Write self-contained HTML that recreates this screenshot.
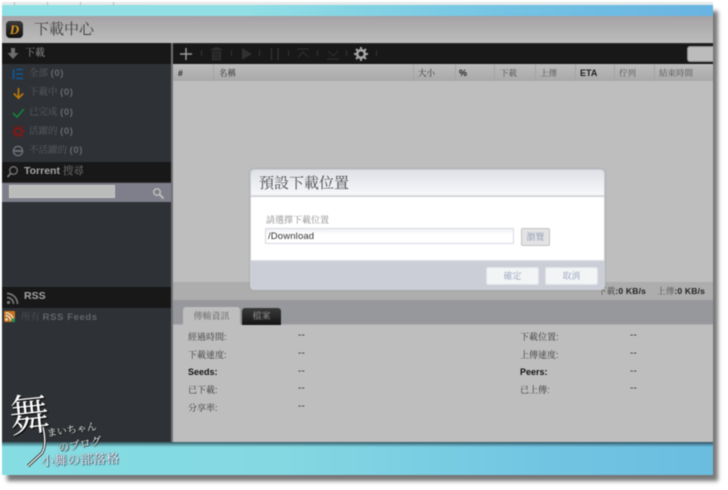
<!DOCTYPE html>
<html lang="zh-Hant"><head><meta charset="utf-8"><title>下載中心</title>
<style>
*{box-sizing:border-box;margin:0;padding:0}
html,body{width:728px;height:490px;overflow:hidden;background:#fff}
body{position:relative;font-family:"Liberation Sans","Noto Serif CJK SC","Noto Serif CJK TC",serif}
#wrap{position:absolute;left:0;top:0;width:728px;height:490px;filter:blur(.45px)}
.a{position:absolute;white-space:nowrap}
.side{font-size:9.500px;color:#5c5f64;font-weight:400;line-height:12px}
.side b{font-weight:700;font-size:9.500px;color:#666a6f;letter-spacing:.6px}
.hd{font-size:8.500px;color:#333;line-height:12px;top:67px}
.sep{position:absolute;top:65px;width:1px;height:16px;background:#a3a3a3}
.ts{position:absolute;top:50px;width:1px;height:6px;background:#333}
.lb{font-size:9px;color:#3a3a3a;line-height:12px}
.v{font-size:10px;color:#333;line-height:12px;letter-spacing:.2px}
.btn{position:absolute;background:#f3f4f6;border:1px solid #dfe1e6;border-radius:2px;color:#8e9db6;font-size:9px;text-align:center}
</style></head><body><div id="wrap">
<!-- screen -->
<div class="a" style="left:2px;top:5px;width:711px;height:470px;box-shadow:5px 6px 4px #777"></div>
<div class="a" style="left:2px;top:2px;width:711px;height:473px;background:linear-gradient(90deg,#8fe0e4 0%,#90dfe5 35%,#75c4e4 70%,#69b4e2 100%)"></div>
<div class="a" style="left:2px;top:2px;width:711px;height:3px;background:#e4e9e9"></div>
<div class="a" style="left:14px;top:2px;width:1px;height:3px;background:#bbb"></div>
<div class="a" style="left:47px;top:2px;width:1px;height:3px;background:#bbb"></div>
<div class="a" style="left:80px;top:2px;width:1px;height:3px;background:#bbb"></div>
<div class="a" style="left:113px;top:2px;width:1px;height:3px;background:#bbb"></div>
<div class="a" style="left:2px;top:442px;width:711px;height:33px;background:linear-gradient(90deg,#85dde2 0%,#84d8e2 40%,#72c6e2 75%,#6bbde0 100%)"></div>
<div class="a" style="left:2px;top:441px;width:711px;height:6px;background:linear-gradient(#23404c,rgba(40,90,110,0))"></div>
<!-- header -->
<div class="a" style="left:2px;top:16px;width:711px;height:27px;background:linear-gradient(#a5a3a5,#bdbdbd)"></div>
<div class="a" style="left:6px;top:21px;width:17px;height:17px;border-radius:4px;background:linear-gradient(#3a3a3a,#111);color:#d9941e;font:italic 700 13px/17px 'Liberation Serif',serif;text-align:center">D</div>
<div class="a" style="left:34px;top:20px;font-size:15px;line-height:20px;color:#3f3f3f">下載中心</div>
<!-- sidebar -->
<div class="a" style="left:2px;top:43px;width:170px;height:399px;background:#2e3135"></div>
<div class="a" style="left:171px;top:43px;width:2px;height:399px;background:#6f7174"></div>
<div class="a" style="left:2px;top:43px;width:169px;height:21px;background:#181818"></div>
<svg class="a" style="left:6px;top:47px" width="14" height="13" viewBox="0 0 14 13"><path d="M5 1h4v5h3.500L7 12 1.500 6H5z" fill="#6d6d6d"/></svg>
<div class="a" style="left:25px;top:47px;font-size:10px;line-height:13px;color:#9a9a9a">下載</div>
<svg class="a" style="left:12px;top:68px" width="12" height="12" viewBox="0 0 12 12"><path d="M1.500 1v10" stroke="#12548f" stroke-width="2"/><path d="M4 1.500h7M4 6h7M4 10.500h7" stroke="#12548f" stroke-width="1.800"/></svg>
<div class="a side" style="left:29px;top:68px">全部 <b>(0)</b></div>
<svg class="a" style="left:12px;top:87px" width="13" height="13" viewBox="0 0 13 13"><path d="M6.500 1v10M1.800 6.500l4.700 4.700 4.700-4.700" fill="none" stroke="#b9780e" stroke-width="1.700"/></svg>
<div class="a side" style="left:29px;top:87px">下載中 <b>(0)</b></div>
<svg class="a" style="left:12px;top:107px" width="13" height="12" viewBox="0 0 13 12"><path d="M1 6l4 4 7-8" fill="none" stroke="#15803c" stroke-width="1.700"/></svg>
<div class="a side" style="left:29px;top:107px">已完成 <b>(0)</b></div>
<svg class="a" style="left:12px;top:125px" width="13" height="13" viewBox="0 0 13 13"><circle cx="6.500" cy="6.500" r="3.300" fill="none" stroke="#8e1414" stroke-width="1.500"/><path d="M6.500 0v2.500M6.500 10.500V13M0 6.500h2.500M10.500 6.500H13M1.800 1.800l1.800 1.800M9.400 9.400l1.800 1.800M11.200 1.800L9.400 3.600M3.600 9.400l-1.800 1.800" stroke="#8e1414" stroke-width="1.400"/></svg>
<div class="a side" style="left:29px;top:126px">活躍的 <b>(0)</b></div>
<svg class="a" style="left:12px;top:145px" width="12" height="12" viewBox="0 0 12 12"><circle cx="6" cy="6" r="4.600" fill="none" stroke="#6a6d71" stroke-width="1.500"/><path d="M1.500 6h9" stroke="#6a6d71" stroke-width="2"/></svg>
<div class="a side" style="left:29px;top:145px">不活躍的 <b>(0)</b></div>
<!-- torrent search -->
<div class="a" style="left:2px;top:162px;width:169px;height:20px;background:#181818"></div>
<svg class="a" style="left:6px;top:165px" width="13" height="14" viewBox="0 0 13 14"><circle cx="7.500" cy="5.500" r="3.800" fill="none" stroke="#777" stroke-width="1.300"/><path d="M4.800 8.300L1.500 12" stroke="#777" stroke-width="1.800"/></svg>
<div class="a" style="left:24px;top:165px;font-size:10.500px;line-height:13px;color:#a5a5a5;font-weight:700">Torrent <span style="font-weight:400;color:#777">搜尋</span></div>
<div class="a" style="left:2px;top:183px;width:169px;height:19px;background:#7e7f8a"></div>
<div class="a" style="left:9px;top:185px;width:106px;height:13px;background:#b9bcb9;border:1px solid #c9c9c9"></div>
<svg class="a" style="left:152px;top:187px" width="13" height="13" viewBox="0 0 13 13"><circle cx="5" cy="5" r="3.300" fill="none" stroke="#bbb" stroke-width="1.500"/><path d="M7.500 7.500l4 4" stroke="#bbb" stroke-width="2"/></svg>
<!-- rss -->
<div class="a" style="left:2px;top:287px;width:169px;height:21px;background:#181818"></div>
<svg class="a" style="left:6px;top:292px" width="13" height="13" viewBox="0 0 13 13"><circle cx="2.500" cy="10.500" r="1.600" fill="#777"/><path d="M1 5.500a6.500 6.500 0 0 1 6.500 6.500M1 1.500A10.500 10.500 0 0 1 11.500 12" fill="none" stroke="#777" stroke-width="1.700"/></svg>
<div class="a" style="left:24px;top:290px;font-size:10.500px;line-height:13px;color:#a5a5a5;font-weight:700">RSS</div>
<div class="a" style="left:4px;top:311px;width:11px;height:11px;background:#c8741a;border-radius:1px"></div>
<svg class="a" style="left:4px;top:311px" width="11" height="11" viewBox="0 0 11 11"><circle cx="2.500" cy="8.500" r="1.200" fill="#eee"/><path d="M1.500 4.500a5 5 0 0 1 5 5M1.500 1.800a7.700 7.700 0 0 1 7.700 7.700" fill="none" stroke="#eee" stroke-width="1.200"/><rect x="7.500" y="7.500" width="3.500" height="3.500" fill="#2c8c4c"/></svg>
<div class="a side" style="left:21px;top:312px;color:#505357">所有 <b style="color:#62656a">RSS Feeds</b></div>
<!-- toolbar -->
<div class="a" style="left:173px;top:43px;width:540px;height:21px;background:#181818;border-top:1px solid #2c2c2c"></div>
<svg class="a" style="left:180px;top:48px" width="12" height="12" viewBox="0 0 12 12"><path d="M6 0v12M0 6h12" stroke="#9a9a9a" stroke-width="1.500"/></svg>
<svg class="a" style="left:210px;top:47px" width="13" height="14" viewBox="0 0 13 14"><path d="M1 2.500h11M4.500 2.500V1h4v1.500" fill="none" stroke="#333" stroke-width="1.200"/><path d="M2 4h9v9.500H2z" fill="#2e2e2e"/><path d="M4.500 5v7.500M6.500 5v7.500M8.500 5v7.500" stroke="#1c1c1c" stroke-width=".8"/></svg>
<svg class="a" style="left:241px;top:48px" width="12" height="12" viewBox="0 0 12 12"><path d="M1 0l10 6-10 6z" fill="#303030"/></svg>
<svg class="a" style="left:270px;top:48px" width="10" height="12" viewBox="0 0 10 12"><path d="M1.500 0v12M8 0v12" stroke="#303030" stroke-width="1.500"/></svg>
<svg class="a" style="left:296px;top:48px" width="14" height="12" viewBox="0 0 14 12"><path d="M1 1h12" stroke="#303030" stroke-width="1.200"/><path d="M2 9l5-5 5 5" fill="none" stroke="#303030" stroke-width="1.100"/></svg>
<svg class="a" style="left:326px;top:48px" width="14" height="12" viewBox="0 0 14 12"><path d="M1 11h12" stroke="#303030" stroke-width="1.200"/><path d="M2 3l5 5 5-5" fill="none" stroke="#303030" stroke-width="1.100"/></svg>
<svg class="a" style="left:354px;top:47px" width="14" height="14" viewBox="0 0 14 14"><circle cx="7" cy="7" r="3.800" fill="none" stroke="#a5a5a5" stroke-width="2.600"/><path d="M7 0v3M7 11v3M0 7h3M11 7h3M2 2l2 2M10 10l2 2M12 2l-2 2M4 10l-2 2" stroke="#a5a5a5" stroke-width="2"/></svg>
<div class="ts" style="left:201px"></div><div class="ts" style="left:231px"></div><div class="ts" style="left:259px"></div><div class="ts" style="left:288px"></div><div class="ts" style="left:317px"></div><div class="ts" style="left:346px"></div><div class="ts" style="left:376px"></div>
<div class="a" style="left:687px;top:46px;width:26px;height:16px;background:#bcbcbc;border-radius:3px 0 0 3px;border:1px solid #8e8e8e;border-right:0"></div>
<!-- main -->
<div class="a" style="left:173px;top:64px;width:540px;height:378px;background:#bebebe"></div>
<div class="a" style="left:173px;top:64px;width:540px;height:17px;background:linear-gradient(#bcbcbc,#a9a9a9)"></div>
<div class="sep" style="left:213px"></div><div class="sep" style="left:413px"></div><div class="sep" style="left:455px"></div><div class="sep" style="left:494px"></div><div class="sep" style="left:535px"></div><div class="sep" style="left:575px"></div><div class="sep" style="left:614px"></div><div class="sep" style="left:654px"></div>
<div class="a hd" style="left:178px;font-weight:700;color:#222">#</div>
<div class="a hd" style="left:219px">名稱</div>
<div class="a hd" style="left:418px">大小</div>
<div class="a hd" style="left:459px;font-weight:700;color:#222;font-size:9px">%</div>
<div class="a hd" style="left:500px;color:#555">下載</div>
<div class="a hd" style="left:540px;color:#555">上傳</div>
<div class="a hd" style="left:580px;font-weight:700;color:#222;font-size:9px">ETA</div>
<div class="a hd" style="left:619px;color:#555">佇列</div>
<div class="a hd" style="left:659px;color:#555">結束時間</div>
<!-- status + tabs -->
<div class="a" style="left:173px;top:282px;width:540px;height:18px;background:#adadad"></div>
<div class="a" style="left:173px;top:300px;width:540px;height:25px;background:#97989c;border-bottom:1px solid #aeaeae"></div>
<div class="a" style="left:598px;top:285px;font-size:8.500px;line-height:12px;font-weight:700;color:#222;letter-spacing:.2px"><span style="font-weight:400;color:#444">下載</span>:0 KB/s</div>
<div class="a" style="left:657px;top:285px;font-size:8.500px;line-height:12px;font-weight:700;color:#222;letter-spacing:.2px"><span style="font-weight:400;color:#555">上傳</span>:0 KB/s</div>
<div class="a" style="left:183px;top:307px;width:57px;height:18px;background:#bebebe;border-radius:3px 3px 0 0;font-size:9px;line-height:18px;text-align:center;color:#666">傳輸資訊</div>
<div class="a" style="left:242px;top:308px;width:39px;height:17px;background:linear-gradient(#3a3a3a,#151515);border-radius:3px 3px 0 0;font-size:9px;line-height:17px;text-align:center;color:#999">檔案</div>
<!-- details -->
<div class="a lb" style="left:188px;top:331px">經過時間:</div><div class="a v" style="left:298px;top:330px">--</div>
<div class="a lb" style="left:188px;top:349px">下載速度:</div><div class="a v" style="left:298px;top:348px">--</div>
<div class="a lb" style="left:188px;top:366px;font-weight:700;color:#111">Seeds:</div><div class="a v" style="left:298px;top:366px">--</div>
<div class="a lb" style="left:188px;top:384px">已下載:</div><div class="a v" style="left:298px;top:383px">--</div>
<div class="a lb" style="left:188px;top:402px">分享率:</div><div class="a v" style="left:298px;top:401px">--</div>
<div class="a lb" style="left:520px;top:331px">下載位置:</div><div class="a v" style="left:630px;top:330px">--</div>
<div class="a lb" style="left:520px;top:349px">上傳速度:</div><div class="a v" style="left:630px;top:348px">--</div>
<div class="a lb" style="left:520px;top:366px;font-weight:700;color:#111">Peers:</div><div class="a v" style="left:630px;top:366px">--</div>
<div class="a lb" style="left:520px;top:384px">已上傳:</div><div class="a v" style="left:630px;top:383px">--</div>
<!-- dialog -->
<div class="a" style="left:250px;top:169px;width:355px;height:121px;background:#cbced6;border-radius:4px;box-shadow:0 0 2px #999"></div>
<div class="a" style="left:251px;top:170px;width:353px;height:26px;background:linear-gradient(#dfe1e7,#f7f8fa);border-radius:4px 4px 0 0;border-bottom:1px solid #dcdde0"></div>
<div class="a" style="left:259px;top:174px;font-size:15px;line-height:20px;color:#4a4a4a">預設下載位置</div>
<div class="a" style="left:251px;top:197px;width:353px;height:64px;background:#fff;border-bottom:1px solid #dfe1e6"></div>
<div class="a" style="left:266px;top:214px;font-size:9px;line-height:12px;color:#8a8a8a">請選擇下載位置</div>
<div class="a" style="left:265px;top:228px;width:249px;height:16px;background:linear-gradient(#f0f1f5,#fff 40%);border:1px solid #d6d8e0;border-radius:1px;font-size:9.500px;line-height:16px;padding-left:2px;color:#333;letter-spacing:.15px">/Download</div>
<div class="btn" style="left:521px;top:228px;width:29px;height:18px;line-height:16px;background:#e3e3e3;border-color:#c3c3c3">瀏覽</div>
<div class="btn" style="left:486px;top:267px;width:53px;height:18px;line-height:16px">確定</div>
<div class="btn" style="left:545px;top:267px;width:53px;height:18px;line-height:16px">取消</div>
<!-- watermark -->
<div class="a" style="left:9px;top:391px;font-size:40px;line-height:44px;color:#fff;font-family:'Noto Serif CJK SC',serif;text-shadow:0 0 1px #000,1px 1px 1px #000;transform:rotate(-6deg) scaleY(1.1)">舞</div>
<svg class="a" style="left:25px;top:415px" width="30" height="55" viewBox="0 0 30 55"><path d="M18 12q4 18-1 26L3 51" fill="none" stroke="#222" stroke-width="3"/><path d="M18 12q4 18-1 26L3 51" fill="none" stroke="#fff" stroke-width="1.300"/></svg>
<div class="a" style="left:47px;top:425px;font-size:10px;line-height:12px;color:#fff;text-shadow:0 0 1px #000,1px 1px 1px #222;transform:rotate(-8deg)">まいちゃん</div>
<div class="a" style="left:58px;top:439px;font-size:11px;line-height:12px;color:#fff;text-shadow:0 0 1px #000,1px 1px 1px #222;transform:rotate(-10deg)">のブログ</div>
<div class="a" style="left:41px;top:452px;font-size:13px;line-height:15px;color:#fff;text-shadow:0 0 1px #235,1px 1px 1px #456;transform:rotate(-2deg)">小舞の部落格</div>
</div></body></html>
